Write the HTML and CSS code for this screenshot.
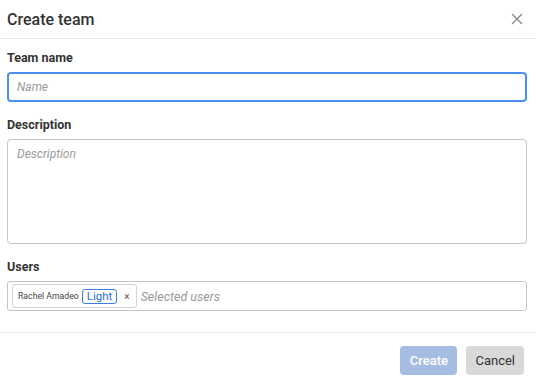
FILE: index.html
```html
<!DOCTYPE html>
<html lang="en">
<head>
  <meta charset="UTF-8" />
  <title>Create team</title>
  <link rel="stylesheet" href="styles.css">
</head>
<body>
  <div class="dialog" role="dialog" aria-label="Create team">
    <header class="dialog-header">
      <h1>Create team</h1>
      <button class="close-btn" aria-label="Close">
        <svg width="12" height="12" viewBox="0 0 12 12"><path d="M1 1L11 11M11 1L1 11" stroke="#8a8a8a" stroke-width="1.4" fill="none"/></svg>
      </button>
    </header>

    <div class="dialog-body">
      <label class="field-label" for="teamName">Team name</label>
      <input id="teamName" class="text-input focused" type="text" placeholder="Name">

      <label class="field-label" for="teamDesc">Description</label>
      <textarea id="teamDesc" class="text-area" placeholder="Description"></textarea>

      <label class="field-label">Users</label>
      <div class="users-box">
        <span class="user-chip">
          <span class="user-name">Rachel Amadeo</span>
          <span class="user-tag">Light</span>
          <span class="chip-remove">×</span>
        </span>
        <span class="users-placeholder">Selected users</span>
      </div>
    </div>

    <footer class="dialog-footer">
      <button class="btn btn-primary" disabled>Create</button>
      <button class="btn btn-secondary">Cancel</button>
    </footer>
  </div>
</body>
</html>
```

FILE: styles.css
```css
* {
  margin: 0; padding: 0; box-sizing: border-box;
}
body {
  font-family: 'Roboto', 'Inter', sans-serif;
  background: #fff;
  color: #333;
  width: 536px;
  height: 383px;
  overflow: hidden;
}
.dialog {
  display: flex;
  flex-direction: column;
  height: 100%;
}

.dialog-header {
  height: 39px;
  display: flex;
  align-items: center;
  justify-content: space-between;
  padding: 0 12px 0 7px;
  border-bottom: 1px solid #e8e8e8;
}
.dialog-header h1 {
  font-size: 16px;
  font-weight: 500;
  color: #333;
}
.close-btn {
  background: none;
  border: none;
  width: 14px;
  height: 14px;
  display: flex;
  align-items: center;
  justify-content: center;
  cursor: pointer;
}

.dialog-body {
  padding: 11px 9px 0 7px;
  display: flex;
  flex-direction: column;
  height: 294px;
  border-bottom: 1px solid #ececec;
}
.field-label {
  font-size: 12.5px;
  font-weight: 700;
  color: #333;
  height: 22px;
  line-height: 16px;
}

.text-input,
.text-area {
  width: 520px;
  font-family: inherit;
  font-size: 12px;
  color: #333;
  border: 1px solid #c4c4c4;
  border-radius: 4px;
  outline: none;
  padding: 0 9px;
  background: #fff;
}
.text-input {
  height: 30px;
  margin-bottom: 15px;
}
.text-input.focused {
  border: 2px solid #4a90f0;
  padding: 0 8px;
}
.text-area {
  height: 105px;
  resize: none;
  padding: 7px 9px;
  margin-bottom: 15px;
}
::placeholder {
  color: #9a9a9a;
  font-style: italic;
}

.users-box {
  width: 520px;
  height: 30px;
  border: 1px solid #c4c4c4;
  border-radius: 3px;
  display: flex;
  align-items: center;
  padding: 0 4px;
  gap: 4px;
}
.user-chip {
  display: flex;
  align-items: center;
  height: 24px;
  border: 1px solid #d4d4d4;
  border-radius: 3px;
  padding: 0 6px 0 5px;
  gap: 3px;
}
.user-name {
  font-size: 8.7px;
  color: #444;
}
.user-tag {
  font-size: 11.5px;
  color: #2d6fd2;
  border: 1px solid #3b7ddc;
  border-radius: 3px;
  padding: 0 4px;
  line-height: 13px;
}
.chip-remove {
  font-size: 10px;
  color: #555;
  margin-left: 4px;
}
.users-placeholder {
  font-size: 12.5px;
  font-style: italic;
  color: #9a9a9a;
}

.dialog-footer {
  flex: 1;
  display: flex;
  justify-content: flex-end;
  align-items: flex-start;
  padding: 13px 12px 0 0;
  gap: 9px;
}
.btn {
  height: 29px;
  min-width: 57px;
  padding: 0 9px;
  border: none;
  border-radius: 4px;
  font-family: inherit;
  font-size: 13px;
  cursor: pointer;
}
.btn-primary {
  background: #a5bde3;
  color: #fff;
  font-weight: 500;
}
.btn-secondary {
  background: #d9d9d9;
  color: #333;
}
```
